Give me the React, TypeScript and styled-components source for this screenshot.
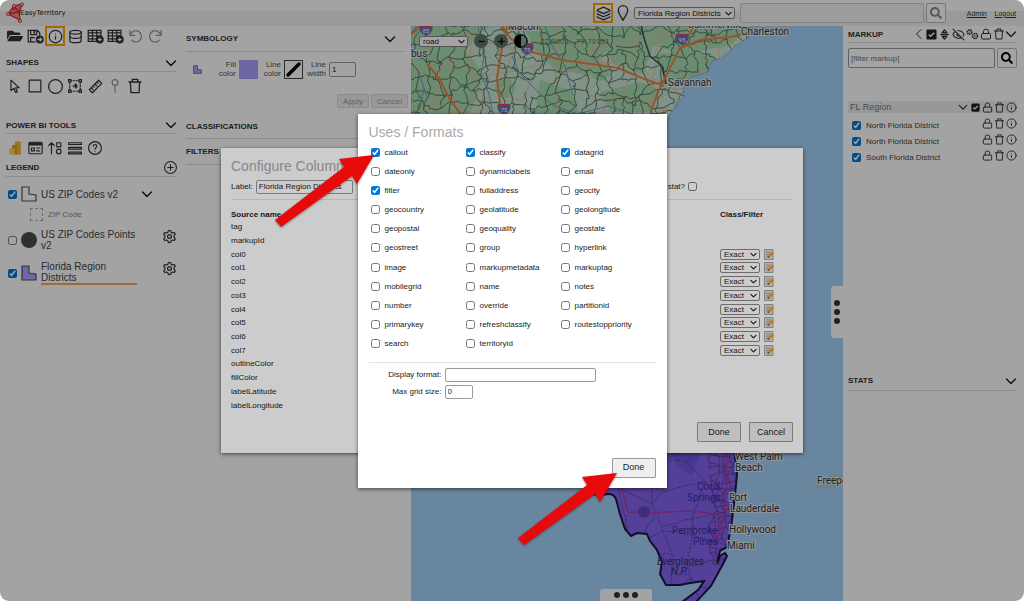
import React, { useState } from 'react';
import type { ReactNode } from 'react';
import styled, { createGlobalStyle } from 'styled-components';
import { Database, EyeOff, Info, Layers, Lock, Settings } from 'lucide-react';
import { FaFolderOpen, FaSearch } from 'react-icons/fa';

const GlobalStyle = createGlobalStyle`
  * { box-sizing: border-box; }
  body {
    margin: 0;
    background: #fff;
    color: #222;
    font: 8px/11px "Liberation Sans", Arial, sans-serif;
  }
  button, input, select { font: inherit; color: inherit; margin: 0; }
  input[type='checkbox'] {
    width: 9px;
    height: 9px;
    flex: none;
    accent-color: #0078d7;
  }
  svg { display: block; flex: none; }
`;

/* ---------- shared parts ---------- */

const Screen = styled.div`
  position: relative;
  display: flex;
  flex-direction: column;
  min-height: 100vh;
  border-radius: 9px;
  overflow: hidden;
  background: #fff;
`;

const IconButton = styled.button<{ $size?: number; $active?: boolean; $faded?: boolean }>`
  display: grid;
  place-items: center;
  flex: none;
  width: ${(p) => p.$size ?? 20}px;
  height: ${(p) => p.$size ?? 20}px;
  padding: 0;
  border: ${(p) => (p.$active ? '2px solid #ffa500' : '0')};
  background: none;
  color: ${(p) => (p.$faded ? '#999' : '#333')};
`;

const TextField = styled.input<{ $w?: string; $h?: number }>`
  width: ${(p) => p.$w ?? '100%'};
  height: ${(p) => p.$h ?? 14}px;
  min-width: 0;
  padding: 0 2px;
  border: 1px solid #999;
  border-radius: 2px;
  background: #fff;
`;

const SelectBox = styled.span<{ $w: number; $h: number }>`
  display: inline-grid;
  align-items: center;
  width: ${(p) => p.$w}px;
  height: ${(p) => p.$h}px;
  > * { grid-area: 1 / 1; }
  > svg { justify-self: end; margin-right: 3px; pointer-events: none; }
`;

const NativeSelect = styled.select`
  appearance: none;
  width: 100%;
  height: 100%;
  padding: 0 3px;
  border: 1px solid #888;
  border-radius: 2px;
  background: #fff;
  line-height: 9px;
`;

const Heading = styled.h2`
  margin: 0;
  font-size: 8px;
  line-height: 11px;
  font-weight: bold;
  color: #333;
`;

const SectionBar = styled.div<{ $h?: number; $inset?: number }>`
  display: flex;
  align-items: center;
  justify-content: space-between;
  height: ${(p) => p.$h ?? 18}px;
  padding-right: ${(p) => p.$inset ?? 0}px;
  border-bottom: 1px solid #ddd;
`;

const Line = ({ d, size = 14, w = 2 }: { d: string; size?: number; w?: number }) => (
  <svg width={size} height={size} viewBox="0 0 24 24" fill="none" stroke="currentColor" strokeWidth={w} strokeLinecap="round" strokeLinejoin="round" aria-hidden="true">
    <path d={d} />
  </svg>
);

const Down = ({ size = 12, w = 3 }: { size?: number; w?: number }) => <Line size={size} w={w} d="M3 8l9 9 9-9" />;

const Select = ({ label, value, w, h }: { label: string; value: string; w: number; h: number }) => (
  <SelectBox $w={w} $h={h}>
    <NativeSelect aria-label={label} defaultValue={value}>
      <option>{value}</option>
    </NativeSelect>
    <Down size={7} w={4} />
  </SelectBox>
);

const TrashIcon = ({ size = 16 }: { size?: number }) => (
  <Line size={size} w={2} d="M3 6h18M8 6V2h8v4M5 6l1 16h12l1-16" />
);

const CheckSquare = ({ size = 11 }: { size?: number }) => (
  <svg width={size} height={size} viewBox="0 0 24 24" aria-hidden="true">
    <rect x="1" y="1" width="22" height="22" rx="3" fill="#222" />
    <path d="M6 12l4 4 8-8" fill="none" stroke="#fff" strokeWidth="3" />
  </svg>
);

const RegionShape = ({ size, fill }: { size: number; fill: string }) => (
  <svg width={size} height={size} viewBox="0 0 16 16" aria-hidden="true">
    <path d="M1 1h7v7l7 1v6H1z" fill={fill} stroke="#555" strokeWidth="1.2" />
  </svg>
);

/* ---------- header ---------- */

const Header = styled.header`
  display: flex;
  align-items: center;
  flex: none;
  height: 26px;
  padding: 0 8px 0 5px;
  background: linear-gradient(#fff 0 11px, #f2f2f2 11px);
`;

const Brand = styled.div`
  display: flex;
  align-items: center;
  flex: 1;
  font: 7px/10px "DejaVu Sans", sans-serif;
  color: #222;
  span { margin-left: -5px; }
`;

const HeaderTools = styled.div`
  display: flex;
  align-items: center;
  width: 353px;
`;

const PinButton = styled(IconButton)`
  margin-right: 1px;
`;

const HeaderSearch = styled.div`
  display: flex;
  flex: 1;
  gap: 2px;
  margin-left: 5px;
`;

const SearchButton = styled.button<{ $dim?: boolean }>`
  display: grid;
  place-items: center;
  flex: none;
  width: 20px;
  height: 20px;
  padding: 0;
  border: 1px solid #bbb;
  border-radius: 2px;
  background: #fff;
  color: ${(p) => (p.$dim ? '#888' : '#000')};
`;

const SearchInput = styled(TextField)`
  border-color: #ccc;
  background: #f6f6f6;
`;

const HeaderLinks = styled.nav`
  display: flex;
  justify-content: flex-end;
  gap: 8px;
  width: 70px;
  font-size: 7px;
  a { color: #333; }
`;

const LogoMark = () => (
  <svg width="20" height="22" viewBox="0 0 20 22" aria-hidden="true">
    <path d="M3 12L8 4l10-2-3 8-1 8z" fill="#f08b92" />
    <path d="M3 12l6-8 8-2-3 8 1 8-12-6 11-2L9 4l0 5" fill="none" stroke="#e0202c" strokeWidth="1.3" />
    <g fill="#fff" stroke="#e0202c">
      <circle cx="9" cy="4" r="1.5" />
      <circle cx="17" cy="2.5" r="1.5" />
      <circle cx="3" cy="12" r="1.5" />
      <circle cx="15" cy="19" r="1.5" />
    </g>
    <circle cx="14" cy="10" r="1.5" fill="#e0202c" />
  </svg>
);

const TopBar = () => (
  <Header>
    <Brand><LogoMark /><span>EasyTerritory</span></Brand>
    <HeaderTools>
      <IconButton $active aria-label="Layers"><Layers size={15} strokeWidth={2} /></IconButton>
      <PinButton aria-label="Location">
        <Line size={16} w={2} d="M12 23C10 18 5 14 5 8a7 7 0 0 1 14 0c0 6-5 10-7 15z" />
      </PinButton>
      <Select label="Active markup" value="Florida Region Districts" w={101} h={12} />
      <HeaderSearch>
        <SearchInput $h={20} aria-label="Search map" />
        <SearchButton $dim aria-label="Search"><FaSearch size={12} /></SearchButton>
      </HeaderSearch>
    </HeaderTools>
    <HeaderLinks>
      <a href="#admin">Admin</a>
      <a href="#logout">Logout</a>
    </HeaderLinks>
  </Header>
);

/* ---------- left tools ---------- */

const Body = styled.main`
  display: flex;
  flex: 1;
`;

const ToolPanel = styled.aside`
  width: 180px;
  flex: none;
  padding: 0 3px 0 6px;
`;

const ToolRow = styled.div<{ $after: number }>`
  display: flex;
  margin: 0 0 ${(p) => p.$after}px -1px;
`;

const LegendItem = styled.label`
  display: flex;
  align-items: center;
  gap: 4px;
  padding-left: 2px;
  margin-top: 6px;
  min-height: 22px;
`;

const LegendName = styled.span<{ $selected?: boolean }>`
  width: 96px;
  font-size: 10px;
  line-height: 11px;
  color: #444;
  border-bottom: ${(p) => (p.$selected ? '2px solid #ffa64d' : '0')};
`;

const LegendAction = styled(IconButton)`
  align-self: flex-start;
  margin-left: auto;
`;

const SubLegend = styled.div`
  display: flex;
  align-items: center;
  gap: 5px;
  height: 18px;
  padding-left: 24px;
  margin-bottom: 6px;
  color: #888;
`;

const DashedBox = styled.span`
  width: 13px;
  height: 13px;
  border: 1px dashed #aaa;
`;

const LegendList = styled.div`
  > label + label { margin-top: 10px; }
`;

const SaveIcon = () => (
  <svg width="17" height="15" viewBox="0 0 28 24" fill="none" stroke="currentColor" strokeWidth="2" aria-hidden="true">
    <path d="M14 21H2V2h15l4 4v6M6 2v7h10V2M6 21v-7h7" />
    <path d="M12 3v4" strokeWidth="3" />
    <circle cx="21" cy="17" r="6.5" fill="currentColor" stroke="none" />
    <path d="M17 17h7M21 14l3 3-3 3" stroke="#fff" />
  </svg>
);

const GridIcon = () => (
  <svg width="17" height="15" viewBox="0 0 28 24" fill="none" stroke="currentColor" strokeWidth="2" aria-hidden="true">
    <path d="M2 2h21v18H2zM2 6h21M2 11h21M2 16h14M9 2v18M16 2v18" />
    <circle cx="21" cy="17" r="6.5" fill="currentColor" stroke="none" />
    <path d="M18 17h6M21 14v6" stroke="#fff" />
  </svg>
);

const BoundsIcon = () => (
  <svg width="14" height="14" viewBox="0 0 24 24" fill="none" stroke="currentColor" strokeWidth="2" aria-hidden="true">
    <path d="M3 3h18v18H3zM14 8l-5 4 5 4" strokeDasharray="4 1" />
    <g fill="#fff">
      <path d="M1 1h4v4H1zM19 1h4v4h-4zM1 19h4v4H1zM19 19h4v4h-4z" />
    </g>
    <path d="M12 9h4v6h-4z" fill="currentColor" stroke="none" />
  </svg>
);

const PowerBiIcon = () => (
  <svg width="14" height="14" viewBox="0 0 24 24" aria-hidden="true">
    <rect x="12" y="1" width="10" height="22" rx="1" fill="#f2b632" />
    <rect x="7" y="7" width="9" height="16" rx="1" fill="#e0a020" />
    <rect x="2" y="13" width="9" height="10" rx="1" fill="#ffd257" />
  </svg>
);

const CardIcon = () => (
  <svg width="15" height="14" viewBox="0 0 26 24" fill="none" stroke="currentColor" strokeWidth="2" aria-hidden="true">
    <rect x="1.500" y="2" width="23" height="20" rx="2" />
    <path d="M2 5h22" strokeWidth="5" />
    <path d="M6 12h5v5H6zM14 12h7M14 17h7" />
  </svg>
);

const HelpIcon = () => (
  <Line d="M12 1a11 11 0 1 0 0 22a11 11 0 0 0 0-22M9 9c0-4 6-4 6 0c0 2.500-3 2.500-3 5M12 18v.2" />
);

const TallButton = styled(IconButton)`
  height: 28px;
`;

const ShapeTool = ({ label, faded, children }: { label: string; faded?: boolean; children: ReactNode }) => (
  <TallButton $faded={faded} aria-label={label}>{children}</TallButton>
);

const Tools = () => (
  <ToolPanel>
    <ToolRow $after={8}>
      <IconButton aria-label="Open"><FaFolderOpen size={16} /></IconButton>
      <IconButton aria-label="Save"><SaveIcon /></IconButton>
      <IconButton $active aria-label="Information"><Info size={15} strokeWidth={2} /></IconButton>
      <IconButton aria-label="Data"><Database size={15} strokeWidth={2} /></IconButton>
      <IconButton aria-label="Add table"><GridIcon /></IconButton>
      <IconButton aria-label="Table details"><GridIcon /></IconButton>
      <IconButton $faded aria-label="Undo"><Line d="M3 2v8h8M4 9a9 9 0 1 1 2 9" size={15} /></IconButton>
      <IconButton $faded aria-label="Redo"><Line d="M21 2v8h-8M20 9a9 9 0 1 0-2 9" size={15} /></IconButton>
    </ToolRow>
    <SectionBar><Heading>SHAPES</Heading><Down /></SectionBar>
    <ToolRow $after={17}>
      <ShapeTool label="Select"><Line d="M5 2v18l5-4 3 7 3-1-3-7h6z" /></ShapeTool>
      <ShapeTool label="Rectangle"><Line d="M2 2h20v20H2z" /></ShapeTool>
      <ShapeTool label="Circle"><Line size={15} d="M12 1a11 11 0 1 0 0 22a11 11 0 0 0 0-22" /></ShapeTool>
      <ShapeTool label="Bounds"><BoundsIcon /></ShapeTool>
      <ShapeTool label="Measure">
        <Line size={15} d="M17 2l5 5L7 22l-5-5zM14 5l2 2M11 8l3 3M8 11l2 2M5 14l3 3" />
      </ShapeTool>
      <ShapeTool label="Pin" faded><Line d="M12 1a5 5 0 1 0 0 10a5 5 0 0 0 0-10M12 11v12" /></ShapeTool>
      <ShapeTool label="Delete"><TrashIcon /></ShapeTool>
    </ToolRow>
    <SectionBar $h={17}><Heading>POWER BI TOOLS</Heading><Down /></SectionBar>
    <ToolRow $after={-3}>
      <ShapeTool label="Power BI"><PowerBiIcon /></ShapeTool>
      <ShapeTool label="Card"><CardIcon /></ShapeTool>
      <ShapeTool label="Sort"><Line d="M6 22V3M1 8l5-5 5 5M15 3h7v7h-7zM18.500 14a4 4 0 1 0 0 8a4 4 0 0 0 0-8" /></ShapeTool>
      <ShapeTool label="Rows"><Line d="M1 3h22v3H1zM1 11h22v3H1zM1 19h22v3H1z" w={2} /></ShapeTool>
      <ShapeTool label="Help"><HelpIcon /></ShapeTool>
    </ToolRow>
    <SectionBar>
      <Heading>LEGEND</Heading>
      <IconButton $size={13} aria-label="Add layer">
        <Line size={13} d="M12 1a11 11 0 1 0 0 22a11 11 0 0 0 0-22M7 12h10M12 7v10" />
      </IconButton>
    </SectionBar>
    <LegendItem>
      <input type="checkbox" defaultChecked />
      <RegionShape size={16} fill="#fff" />
      <LegendName>US ZIP Codes v2</LegendName>
      <Down />
    </LegendItem>
    <SubLegend><DashedBox />ZIP Code</SubLegend>
    <LegendList>
      <LegendItem>
        <input type="checkbox" />
        <svg width="16" height="16" viewBox="0 0 16 16" aria-hidden="true"><circle cx="8" cy="8" r="8" fill="#4d4d4d" /></svg>
        <LegendName>US ZIP Codes Points v2</LegendName>
        <LegendAction $size={15} aria-label="Points settings"><Settings size={15} strokeWidth={2} /></LegendAction>
      </LegendItem>
      <LegendItem>
        <input type="checkbox" defaultChecked />
        <RegionShape size={16} fill="#a9a4ff" />
        <LegendName $selected>Florida Region Districts</LegendName>
        <LegendAction $size={15} aria-label="Districts settings"><Settings size={15} strokeWidth={2} /></LegendAction>
      </LegendItem>
    </LegendList>
  </ToolPanel>
);

/* ---------- symbology ---------- */

const StylePanel = styled.section`
  width: 231px;
  flex: none;
  padding: 0 7px 0 6px;
`;

const StyleRow = styled.div`
  display: flex;
  align-items: center;
  gap: 3px;
  height: 34px;
  padding-left: 7px;
  line-height: 9px;
  text-align: right;
`;

const StyleLabel = styled.label<{ $w: number }>`
  width: ${(p) => p.$w}px;
  color: #555;
`;

const Swatch = styled.button<{ $fill: string; $edge: string }>`
  width: 19px;
  height: 19px;
  padding: 0;
  border: 1px solid ${(p) => p.$edge};
  background: ${(p) => p.$fill};
`;

const StyleActions = styled.div`
  display: flex;
  justify-content: flex-end;
  gap: 2px;
  margin: 8px -4px 6px 0;
`;

const SmallButton = styled.button`
  height: 14px;
  padding: 0 5px;
  border: 1px solid #ddd;
  border-radius: 1px;
  background: #efefef;
  color: #999;
`;

const Symbology = () => (
  <StylePanel>
    <SectionBar $h={26} $inset={8}><Heading>SYMBOLOGY</Heading><Down /></SectionBar>
    <StyleRow>
      <RegionShape size={9} fill="#a9a4ff" />
      <StyleLabel $w={31} htmlFor="fill">Fill<br />color</StyleLabel>
      <Swatch id="fill" $fill="#a9a4ff" $edge="#a9a4ff" aria-label="Fill color" />
      <StyleLabel $w={20} htmlFor="stroke">Line<br />color</StyleLabel>
      <Swatch id="stroke" $fill="#fff" $edge="#444" aria-label="Line color">
        <svg width="17" height="17" viewBox="0 0 17 17"><path d="M3 14L14 3" stroke="#000" strokeWidth="3.5" strokeLinecap="round" /></svg>
      </Swatch>
      <StyleLabel $w={20} htmlFor="width">Line<br />width</StyleLabel>
      <TextField id="width" $w="27px" $h={15} defaultValue="1" />
    </StyleRow>
    <StyleActions>
      <SmallButton disabled>Apply</SmallButton>
      <SmallButton disabled>Cancel</SmallButton>
    </StyleActions>
    <SectionBar $h={25} $inset={8}><Heading>CLASSIFICATIONS</Heading><Down /></SectionBar>
    <SectionBar $h={26} $inset={8}><Heading>FILTERS</Heading><Down /></SectionBar>
  </StylePanel>
);

/* ---------- map ---------- */

const MapArea = styled.section`
  position: relative;
  flex: 1;
  min-width: 0;
  overflow: hidden;
  background: #a6d3fb;
  color: #222;
`;

const MapDrawing = styled.svg`
  position: absolute;
  inset: 0;
  width: 100%;
  height: 100%;
  font-family: Roboto, sans-serif;
  font-size: 10px;
`;

const MapControls = styled.div`
  position: absolute;
  top: 8px;
  left: 8px;
  display: flex;
  align-items: center;
  gap: 6px;
`;

const Coordinates = styled.span`
  margin-left: 6px;
  color: #5c7f68;
`;

const RoundButton = styled.button`
  display: grid;
  place-items: center;
  width: 14px;
  height: 14px;
  padding: 0;
  border: 0;
  border-radius: 50%;
  background: #62786a;
  color: #111;
`;

const SideHandle = styled.button<{ $bottom?: boolean }>`
  position: absolute;
  display: flex;
  flex-direction: ${(p) => (p.$bottom ? 'row' : 'column')};
  align-items: center;
  justify-content: center;
  gap: 3px;
  padding: 0;
  border: 0;
  background: #fff;
  ${(p) =>
    p.$bottom
      ? 'bottom: 0; left: 189px; width: 52px; height: 12px; border-radius: 3px 3px 0 0;'
      : 'right: 0; top: 260px; width: 12px; height: 52px; border-radius: 3px 0 0 3px;'}
  span { width: 6px; height: 6px; border-radius: 50%; background: #333; }
`;

const COAST = 'M411 26H757L748 38 735 46 722 58 712 61 708 72 700 75 692 76 684 88 684 96 678 104 670 114 664 130H411z';
const FLORIDA =
  'M590 440V494L603 495Q613 492 616 499L620 514 625 529 631 536 637 533 647 534 650 541 657 550 662 562 660 574 666 585 680 585 690 583 704 581 698 590 682 602H696L711 586 723 564 727 556 725 553 720 556 717 563 720 551 727 547 731 528 735 495 737 474 733 440z';

// Small seeded generator, so that the boundaries are the same on each load.
function network(x0: number, y0: number, x1: number, y1: number, cell: number, seed: number, wobble: number) {
  let s = seed;
  const rnd = () => {
    s = (s * 16807) % 2147483647;
    return s / 2147483647;
  };
  const cols = Math.ceil((x1 - x0) / cell) + 1;
  const rows = Math.ceil((y1 - y0) / cell) + 1;
  const pts = Array.from({ length: rows }, (_, r) =>
    Array.from({ length: cols }, (_, c) => [
      Math.round(x0 + c * cell + (rnd() - 0.5) * cell),
      Math.round(y0 + r * cell + (rnd() - 0.5) * cell),
    ]),
  );
  let d = '';
  const edge = (a: number[], b: number[]) => {
    d += `M${a[0]} ${a[1]}`;
    for (const t of [0.25, 0.5, 0.75]) {
      const x = a[0] + (b[0] - a[0]) * t + (rnd() - 0.5) * wobble;
      const y = a[1] + (b[1] - a[1]) * t + (rnd() - 0.5) * wobble;
      d += `L${x.toFixed(1)} ${y.toFixed(1)}`;
    }
    d += `L${b[0]} ${b[1]}`;
  };
  for (let r = 0; r < rows; r++) {
    for (let c = 0; c < cols; c++) {
      if (c + 1 < cols && rnd() > 0.15) edge(pts[r][c], pts[r][c + 1]);
      if (r + 1 < rows && rnd() > 0.15) edge(pts[r][c], pts[r + 1][c]);
    }
  }
  return d;
}

const COUNTIES = network(405, 20, 765, 125, 12, 77, 4);
const BYWAYS = network(405, 20, 765, 125, 25, 991, 4);
const FL_ZIPS = network(598, 445, 740, 600, 24, 41, 2);
const FL_URBAN = network(712, 445, 738, 560, 6, 19, 2);

const Shield = ({ x, y, n }: { x: number; y: number; n: string }) => (
  <g>
    <path d={`M${x - 6} ${y - 5}h12c2 6-2 9-6 11c-4-2-8-5-6-11z`} fill="#6a70b8" />
    <path d={`M${x - 6} ${y - 5}h12v2h-12z`} fill="#e0475a" />
    <text x={x} y={y + 3} fill="#fff" fontSize="6" textAnchor="middle">{n}</text>
  </g>
);

const MapLabel = ({ x, y, children }: { x: number; y: number; children: string }) => (
  <text x={x} y={y} fill="#333" stroke="#dfeaf0" strokeWidth="2" paintOrder="stroke">{children}</text>
);

const MapView = () => (
  <MapArea>
    <MapDrawing viewBox="411 26 432 575" preserveAspectRatio="xMinYMin slice" role="img" aria-label="Road map of Georgia and Florida">
      <defs>
        <clipPath id="land"><path d={COAST} /></clipPath>
        <clipPath id="florida"><path d={FLORIDA} /></clipPath>
      </defs>
      <path d={COAST} fill="#cbe6d2" />
      <g clipPath="url(#land)" fill="none">
        <g fill="#a8dcb2">
          <path d="M405 20h90l-30 30 20 25-15 40h-65zM520 20h60l30 25-20 30-35-5-20-20zM590 20h55l10 22-12 32-30-10zM540 80l30 10 10 25h-45zM600 92l40-10 20 8-8 22h-42zM655 55l30-5 30 8-20 30-30-8zM650 20l40 6 60 0-20 20-50 8-30-10z" />
          <circle cx="600" cy="72" r="9" /><circle cx="640" cy="55" r="8" />
          <circle cx="455" cy="62" r="12" /><circle cx="505" cy="88" r="10" />
        </g>
        <path d={BYWAYS} stroke="#eebb9c" strokeWidth="1" />
        <path d={COUNTIES} stroke="#55785f" strokeWidth="1" />
        <path d="M478 26l6 30-3 18 8 20 5 26M512 56l8 18 14 14 20 18 24 8 30-8 30 10M545 26l6 18 14 22 8 30M672 114l8-18 10-14M424 88l-4 20-8 8M420 76l8 24" stroke="#6e9cc8" strokeWidth="1" />
        <path d="M640 20l4 18 6 18 12 10 4 18" stroke="#444a60" strokeWidth="1.5" />
        <g stroke="#f08246" strokeWidth="2">
          <path d="M508 20l-2 14-4 14-5 30 4 34M498 20l12 18 22 14 30 8 36 5 20 3 24 10 22 8" />
          <path d="M648 120l10-28 8-16 14-28 20-8 30-3 14-3 26-12M694 26l-14 24M427 64l12 14 10 20 10 14 12 12M412 34l14-12" />
        </g>
      </g>
      <path d={COAST} fill="none" stroke="#7fa6d8" strokeWidth="1" strokeDasharray="2 1" />
      <Shield x={426} y={30} n="85" />
      <Shield x={527} y={49} n="75" />
      <Shield x={504} y={109} n="75" />
      <Shield x={682} y={39} n="95" />
      <path d="M802 476l10 8 4 4h12l15-3v-9l-8-2-8 3-4 8-8 0-12-10z" fill="#b7ccb8" />

      <path d={FLORIDA} fill="#8566f0" />
      <g clipPath="url(#florida)" fill="none">
        <path d="M666 440l10 24 16 12 6-16 8-20z" fill="#7058e8" />
        <path d={FL_ZIPS} stroke="#5a4898" strokeWidth="1" strokeDasharray="3 1" />
        <path d={FL_URBAN} stroke="#693da6" strokeWidth="1" />
        <path d="M622 490l6 22 20 1 40-2 30 3M726 445l1 40-5 40-6 18M715 514l1 30" stroke="#b03ca6" strokeWidth="1.5" />
        <circle cx="644" cy="512" r="6" fill="#6a44c8" />
      </g>
      <path d={FLORIDA} fill="none" stroke="#1c1644" strokeWidth="2" />

      <g fill="#3d2aa8">
        <text x="697" y="490">Coral</text>
        <text x="687" y="501">Springs</text>
        <text x="672" y="534">Pembroke</text>
        <text x="693" y="545">Pines</text>
        <g fontStyle="italic" fill="#33305e">
          <text x="657" y="565">Everglades</text>
          <text x="671" y="575">N.P.</text>
        </g>
      </g>
      <MapLabel x={508} y={30}>Macon</MapLabel>
      <MapLabel x={411} y={57}>bus</MapLabel>
      <MapLabel x={688} y={28}>Summerville</MapLabel>
      <MapLabel x={741} y={35}>Charleston</MapLabel>
      <MapLabel x={668} y={86}>Savannah</MapLabel>
      <MapLabel x={735} y={460}>West Palm</MapLabel>
      <MapLabel x={735} y={471}>Beach</MapLabel>
      <MapLabel x={729} y={501}>Fort</MapLabel>
      <MapLabel x={730} y={512}>Lauderdale</MapLabel>
      <MapLabel x={729} y={533}>Hollywood</MapLabel>
      <MapLabel x={727} y={549}>Miami</MapLabel>
      <MapLabel x={817} y={484}>Freeport</MapLabel>
    </MapDrawing>
    <MapControls>
      <Select label="Map style" value="road" w={49} h={11} />
      <RoundButton aria-label="Zoom out"><Line size={9} w={4} d="M5 12h14" /></RoundButton>
      <RoundButton aria-label="Zoom in"><Line size={9} w={4} d="M4 12h16M12 4v16" /></RoundButton>
      <RoundButton aria-label="Contrast">
        <svg width="14" height="14" viewBox="0 0 14 14"><circle cx="7" cy="7" r="6" fill="#8fae97" stroke="#000" strokeWidth="1" /><path d="M7 0a7 7 0 0 0 0 14z" fill="#000" /></svg>
      </RoundButton>
      <Coordinates>32.0803, -77.79131</Coordinates>
    </MapControls>
    <SideHandle aria-label="Resize markup panel"><span /><span /><span /></SideHandle>
    <SideHandle $bottom aria-label="Open data grid"><span /><span /><span /></SideHandle>
  </MapArea>
);

/* ---------- right panel ---------- */

const MarkupPanel = styled.aside`
  display: flex;
  flex-direction: column;
  width: 181px;
  flex: none;
  padding: 0 7px 0 5px;
`;

const PanelPart = styled.section<{ $share: number }>`
  flex: ${(p) => p.$share} 1 0;
`;

const IconStrip = styled.div`
  display: flex;
  align-items: center;
  height: 12px;
  color: #333;
`;

const FilterRow = styled.div`
  display: flex;
  gap: 2px;
  margin: 5px 0 33px;
`;

const GroupRow = styled.div`
  display: flex;
  align-items: center;
  justify-content: space-between;
  height: 12px;
  background: #eceff0;
  font-size: 9px;
  color: #777;
  padding-left: 2px;
`;

const MarkupList = styled.ul`
  margin: 4px 0 0;
  padding: 0 0 0 4px;
  list-style: none;
  li { display: flex; justify-content: space-between; align-items: flex-start; height: 16px; }
  label { display: flex; align-items: center; gap: 5px; padding-top: 3px; color: #444; }
`;

const RowTools = ({ name }: { name: string }) => (
  <>
    <IconButton $size={12} aria-label={`Lock ${name}`}><Lock size={11} strokeWidth={2} /></IconButton>
    <IconButton $size={12} aria-label={`Delete ${name}`}><TrashIcon size={11} /></IconButton>
    <IconButton $size={12} aria-label={`About ${name}`}><Info size={11} strokeWidth={2} /></IconButton>
  </>
);

const districts = ['North Florida District', 'North Florida District', 'South Florida District'];

const Markup = () => (
  <MarkupPanel>
    <PanelPart $share={3}>
      <SectionBar $h={17}>
        <Heading>MARKUP</Heading>
        <IconStrip>
          <IconButton $size={13} aria-label="Collapse"><Line size={12} d="M16 3l-9 9 9 9" /></IconButton>
          <IconButton $size={13} aria-label="Check all"><CheckSquare size={11} /></IconButton>
          <IconButton $size={13} aria-label="Reorder"><Line size={11} w={3} d="M12 2l5 6H7zM12 22l5-6H7zM4 12h16" /></IconButton>
          <IconButton $size={14} aria-label="Hide"><EyeOff size={13} strokeWidth={2} /></IconButton>
          <IconButton $size={14} aria-label="Options">
            <svg width="13" height="12" viewBox="0 0 26 24" fill="none" stroke="currentColor" aria-hidden="true">
              <circle cx="7" cy="8" r="4.5" strokeWidth="3" strokeDasharray="3 1" />
              <circle cx="7" cy="8" r="1" />
              <circle cx="18" cy="16" r="5" strokeWidth="3" strokeDasharray="3 1" />
              <circle cx="18" cy="16" r="1" />
            </svg>
          </IconButton>
          <IconButton $size={13} aria-label="Lock all"><Lock size={12} strokeWidth={2} /></IconButton>
          <IconButton $size={13} aria-label="Delete all"><TrashIcon size={12} /></IconButton>
          <IconButton $size={12} aria-label="Expand"><Down /></IconButton>
        </IconStrip>
      </SectionBar>
      <FilterRow>
        <TextField $h={20} placeholder="[filter markup]" aria-label="Filter markup" />
        <SearchButton aria-label="Apply filter"><FaSearch size={12} /></SearchButton>
      </FilterRow>
      <GroupRow>
        FL Region
        <IconStrip>
          <IconButton $size={12} aria-label="Toggle group"><Down size={10} /></IconButton>
          <IconButton $size={12} aria-label="Check group"><CheckSquare size={9} /></IconButton>
          <RowTools name="FL Region" />
        </IconStrip>
      </GroupRow>
      <MarkupList>
        {districts.map((name, i) => (
          <li key={i}>
            <label><input type="checkbox" defaultChecked />{name}</label>
            <IconStrip><RowTools name={name} /></IconStrip>
          </li>
        ))}
      </MarkupList>
    </PanelPart>
    <PanelPart $share={2}>
      <SectionBar $h={20}><Heading>STATS</Heading><Down /></SectionBar>
    </PanelPart>
  </MarkupPanel>
);

/* ---------- dialogs ---------- */

const Overlay = styled.div`
  position: absolute;
  inset: 0;
  display: grid;
  place-items: center;
  background: rgba(0, 0, 0, 0.2);
`;

const Dialog = styled.div<{ $w: number; $h: number; $pad: string }>`
  position: relative;
  display: flex;
  flex-direction: column;
  width: ${(p) => p.$w}px;
  min-height: ${(p) => p.$h}px;
  padding: ${(p) => p.$pad};
  background: #fff;
  box-shadow: 0 1px 4px rgba(0, 0, 0, 0.6);
`;

const DialogTitle = styled.h1`
  margin: 0;
  font-size: 14px;
  line-height: 16px;
  font-weight: normal;
  color: #aaa;
`;

const LabelRow = styled.div`
  display: flex;
  align-items: center;
  justify-content: space-between;
  height: 26px;
  padding-right: 96px;
  border-bottom: 1px solid #e4e4e4;
  label { display: flex; align-items: center; gap: 3px; }
`;

const ColumnTable = styled.table`
  width: 100%;
  height: 203px;
  margin-top: 9px;
  border-collapse: collapse;
  th, td { padding: 0; text-align: left; line-height: 11px; }
  th { height: 11px; }
  th:last-child, td:last-child { width: 73px; }
`;

const ClassCell = styled.div`
  display: flex;
  align-items: center;
  gap: 3px;
`;

const DialogActions = styled.div`
  display: flex;
  justify-content: flex-end;
  gap: 8px;
  margin-top: auto;
`;

const DialogButton = styled.button`
  width: 44px;
  height: 20px;
  padding: 0;
  border: 1px solid #999;
  border-radius: 1px;
  background: #efefef;
  font-size: 9px;
`;

const UsesGrid = styled.div`
  display: grid;
  grid-template-columns: 95px 95px 1fr;
  grid-auto-rows: 1fr;
  height: 211px;
  padding-left: 2px;
  margin: 3px 0 8px;
  label { display: flex; align-items: center; gap: 5px; }
`;

const FormatForm = styled.div`
  display: grid;
  grid-template-columns: 73px 151px;
  gap: 3px;
  align-items: center;
  padding-top: 5px;
  border-top: 1px solid #e4e4e4;
  label { text-align: right; }
`;

const Arrow = styled.svg<{ $x: number; $y: number }>`
  position: absolute;
  left: ${(p) => p.$x}px;
  top: ${(p) => p.$y}px;
  pointer-events: none;
  filter: drop-shadow(0 1px 1px rgba(0, 0, 0, 0.4));
`;

const PointerArrow = ({ x, y }: { x: number; y: number }) => (
  <Arrow $x={x} $y={y} width="102" height="76" viewBox="0 0 102 76" aria-hidden="true">
    <path d="M1 66L70 13 65 5 100 1 83 30 78 22 7 73z" fill="#e80a0a" />
  </Arrow>
);

const EditIcon = () => (
  <svg width="10" height="11" viewBox="0 0 20 22" aria-hidden="true">
    <path d="M1 1h17v20H1z" fill="#ddd" stroke="#888" strokeWidth="1.5" />
    <path d="M4 6h10M4 10h8M4 14h5" stroke="#889" strokeWidth="1.5" />
    <path d="M7 18l2-6 7-7 4 4-8 7z" fill="#f59a1c" />
    <path d="M7 18l1-4 3 3z" fill="#444" />
  </svg>
);

const sources = [
  'tag', 'markupId', 'col0', 'col1', 'col2', 'col3', 'col4', 'col5', 'col6', 'col7',
  'outlineColor', 'fillColor', 'labelLatitude', 'labelLongitude',
];

const uses = [
  'callout', 'classify', 'datagrid', 'dateonly', 'dynamiclabels', 'email', 'filter', 'fulladdress', 'geocity',
  'geocountry', 'geolatitude', 'geolongitude', 'geopostal', 'geoquality', 'geostate', 'geostreet', 'group', 'hyperlink',
  'image', 'markupmetadata', 'markuptag', 'mobilegrid', 'name', 'notes', 'number', 'override', 'partitionid',
  'primarykey', 'refreshclassify', 'routestoppriority', 'search', 'territoryid',
];

const ColumnsDialog = () => (
  <Overlay>
    <Dialog $w={582} $h={305} $pad="10px 10px 11px" role="dialog" aria-label="Configure Columns">
      <DialogTitle>Configure Columns</DialogTitle>
      <LabelRow>
        <label>Label: <TextField $w="97px" defaultValue="Florida Region Districts" /></label>
        <label>Use as stat? <input type="checkbox" /></label>
      </LabelRow>
      <ColumnTable>
        <thead>
          <tr><th>Source name</th><th>Class/Filter</th></tr>
        </thead>
        <tbody>
          {sources.map((name) => (
            <tr key={name}>
              <td>{name}</td>
              <td>
                {name.startsWith('col') && (
                  <ClassCell>
                    <Select label={`Match for ${name}`} value="Exact" w={40} h={11} />
                    <IconButton $size={11} aria-label={`Edit ${name}`}><EditIcon /></IconButton>
                  </ClassCell>
                )}
              </td>
            </tr>
          ))}
        </tbody>
      </ColumnTable>
      <DialogActions>
        <DialogButton>Done</DialogButton>
        <DialogButton>Cancel</DialogButton>
      </DialogActions>
    </Dialog>
  </Overlay>
);

const UsesDialog = () => {
  const [picked, setPicked] = useState(['callout', 'classify', 'datagrid', 'filter']);
  const toggle = (name: string) =>
    setPicked((now) => (now.includes(name) ? now.filter((n) => n !== name) : [...now, name]));
  return (
    <Overlay>
      <Dialog $w={309} $h={374} $pad="10px 11px" role="dialog" aria-label="Uses and formats">
        <DialogTitle>Uses / Formats</DialogTitle>
        <UsesGrid>
          {uses.map((name) => (
            <label key={name}>
              <input type="checkbox" checked={picked.includes(name)} onChange={() => toggle(name)} />
              {name}
            </label>
          ))}
        </UsesGrid>
        <FormatForm>
          <label htmlFor="format">Display format:</label>
          <TextField id="format" />
          <label htmlFor="grid-size">Max grid size:</label>
          <TextField id="grid-size" $w="28px" defaultValue="0" />
        </FormatForm>
        <DialogActions><DialogButton>Done</DialogButton></DialogActions>
        <PointerArrow x={-84} y={40} />
        <PointerArrow x={159} y={358} />
      </Dialog>
    </Overlay>
  );
};

export default function App() {
  return (
    <>
      <GlobalStyle />
      <Screen>
        <TopBar />
        <Body>
          <Tools />
          <Symbology />
          <MapView />
          <Markup />
        </Body>
        <ColumnsDialog />
        <UsesDialog />
      </Screen>
    </>
  );
}
